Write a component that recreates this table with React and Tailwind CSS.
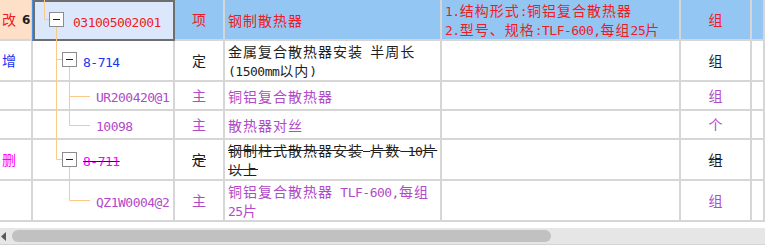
const RED = 'text-[#ee1c24]'
const BLUE = 'text-[#1c34ee]'
const PURPLE = 'text-[#b24ac8]'
const MAGENTA = 'text-[#ff00ff]'
const BLACK = 'text-[#1e1e1e]'

// splits a line into half-width (ascii) and full-width runs so the widths
// come out like the old bitmap font: 7px latin, 15px hanzi
function Txt({ s, strike }) {
  const parts = s.match(/[\x00-\x7f]+|[^\x00-\x7f]+/g) || []
  const deco = strike ? 'line-through decoration-[#222]' : ''
  return parts.map((p, i) =>
    /^[\x00-\x7f]/.test(p) ? (
      <span
        key={i}
        className={`font-['DejaVu_Sans_Mono',monospace] text-[13px] tracking-[-0.5px] ${deco}`}
      >
        {p}
      </span>
    ) : (
      <span
        key={i}
        className={`font-['Noto_Sans_CJK_SC',sans-serif] text-[14px] tracking-[1px] ${deco}`}
      >
        {p}
      </span>
    ),
  )
}

function Lines({ lines, strike }) {
  return (
    <div className="flex flex-col leading-[17px] whitespace-pre">
      {lines.map((line) => (
        <div key={line}>
          <Txt s={line} strike={strike} />
        </div>
      ))}
    </div>
  )
}

const ROWS = [
  {
    header: true,
    code: '031005002001',
    pad: 'pl-[38px]',
    codeColor: RED,
    type: '项',
    typeColor: RED,
    desc: ['钢制散热器'],
    descColor: RED,
    feat: ['1.结构形式:铜铝复合散热器', '2.型号、规格:TLF-600,每组25片'],
    unit: '组',
    unitColor: RED,
  },
  {
    tag: '增',
    tagColor: BLUE,
    code: '8-714',
    pad: 'pl-[50px]',
    codeColor: BLUE,
    type: '定',
    typeColor: BLACK,
    desc: ['金属复合散热器安装 半周长', '(1500mm以内)'],
    descColor: BLACK,
    unit: '组',
    unitColor: BLACK,
  },
  {
    code: 'UR200420@1',
    pad: 'pl-[63px]',
    codeColor: PURPLE,
    type: '主',
    typeColor: PURPLE,
    desc: ['铜铝复合散热器'],
    descColor: PURPLE,
    unit: '组',
    unitColor: PURPLE,
  },
  {
    code: '10098',
    pad: 'pl-[63px]',
    codeColor: PURPLE,
    type: '主',
    typeColor: PURPLE,
    desc: ['散热器对丝'],
    descColor: PURPLE,
    unit: '个',
    unitColor: PURPLE,
  },
  {
    tag: '删',
    tagColor: MAGENTA,
    strike: true,
    code: '8-711',
    pad: 'pl-[50px]',
    codeColor: MAGENTA,
    type: '定',
    typeColor: BLACK,
    desc: ['钢制柱式散热器安装 片数 10片', '以上'],
    descColor: BLACK,
    unit: '组',
    unitColor: BLACK,
  },
  {
    code: 'QZ1W0004@2',
    pad: 'pl-[63px]',
    codeColor: PURPLE,
    type: '主',
    typeColor: PURPLE,
    desc: ['铜铝复合散热器 TLF-600,每组', '25片'],
    descColor: PURPLE,
    unit: '组',
    unitColor: PURPLE,
  },
]

const cell = 'flex items-center overflow-hidden border-r-2 border-b-2 border-[#d6d6d6]'

function TreeLines() {
  const stroke = '#fbc98c'
  const box = (x, y) => (
    <g>
      <rect x={x + 0.5} y={y + 0.5} width="14" height="14" fill="#fff" stroke="#8c8c8c" />
      <line x1={x + 4} y1={y + 7.5} x2={x + 11} y2={y + 7.5} stroke="#222" />
    </g>
  )
  return (
    <svg
      className="pointer-events-none absolute left-0 top-0"
      width="765"
      height="222"
      viewBox="0 0 765 222"
    >
      <g stroke={stroke} fill="none">
        <path d="M44.5 0V19.5H49" />
        <path d="M56.5 27V159.5H62" />
        <path d="M56.5 59.5H62" />
        <path d="M69.5 67V125.5H90" />
        <path d="M69.5 96.5H90" />
        <path d="M69.5 167V200.5H90" />
      </g>
      {box(49, 12)}
      {box(62, 52)}
      {box(62, 152)}
    </svg>
  )
}

export default function App() {
  return (
    <div className="h-[247px] w-[765px] overflow-hidden bg-white font-['Noto_Sans_CJK_SC',sans-serif]">
      <div className="relative grid grid-cols-[33px_142px_50px_217px_239px_71px_13px] grid-rows-[41px_41px_29px_29px_41px_41px]">
        {ROWS.map((r) => {
          const strike = r.strike ? 'line-through decoration-[#222]' : ''
          const bg = r.header ? 'bg-[#93c6f2]' : 'bg-white'
          return [
            <div key={r.code + 'a'} className={`${cell} ${r.header ? 'bg-[#fde0c7]' : 'bg-white'} pl-[2px]`}>
              {r.header ? (
                <>
                  <span className={`${RED} text-[14px]`}>改</span>
                  <span className="ml-[6px] font-['DejaVu_Sans',sans-serif] text-[12px] font-bold text-[#1e1e1e]">
                    6
                  </span>
                </>
              ) : (
                r.tag && <span className={`${r.tagColor} text-[14px] tracking-[1px]`}>{r.tag}</span>
              )}
            </div>,
            <div
              key={r.code + 'b'}
              className={
                r.header
                  ? `flex items-center overflow-hidden border-2 border-[#6e6e6e] bg-[#dbe8fb] shadow-[-1px_0_0_#4b8fdc] ${r.pad}`
                  : `${cell} bg-white ${r.pad}`
              }
            >
              <span className={`${r.codeColor} whitespace-pre`}>
                <Txt s={r.code} strike={r.strike} />
              </span>
            </div>,
            <div key={r.code + 'c'} className={`${cell} ${bg} justify-center`}>
              <span className={`${r.typeColor} ${strike} text-[14px]`}>{r.type}</span>
            </div>,
            <div key={r.code + 'd'} className={`${cell} ${bg} pl-[3px] ${r.descColor}`}>
              <Lines lines={r.desc} strike={r.strike} />
            </div>,
            <div key={r.code + 'e'} className={`${cell} ${bg} pl-[3px] ${RED}`}>
              {r.feat && <Lines lines={r.feat} />}
            </div>,
            <div key={r.code + 'f'} className={`${cell} ${bg} justify-center`}>
              <span className={`${r.unitColor} ${strike} text-[14px]`}>{r.unit}</span>
            </div>,
            <div key={r.code + 'g'} className={`${cell} ${bg}`} />,
          ]
        })}
        <TreeLines />
      </div>

      <div className="mt-[6px] flex h-[17px] items-center border-b border-[#d4d4d4] bg-[#e6e6e6]">
        <svg width="6" height="9" viewBox="0 0 6 9" className="ml-[1px]">
          <path d="M0 4.5L5 0V9Z" fill="#5a5a5a" />
        </svg>
        <div className="ml-[5px] h-[12px] w-[539px] rounded-full bg-[#c1c1c1]" />
      </div>
    </div>
  )
}
